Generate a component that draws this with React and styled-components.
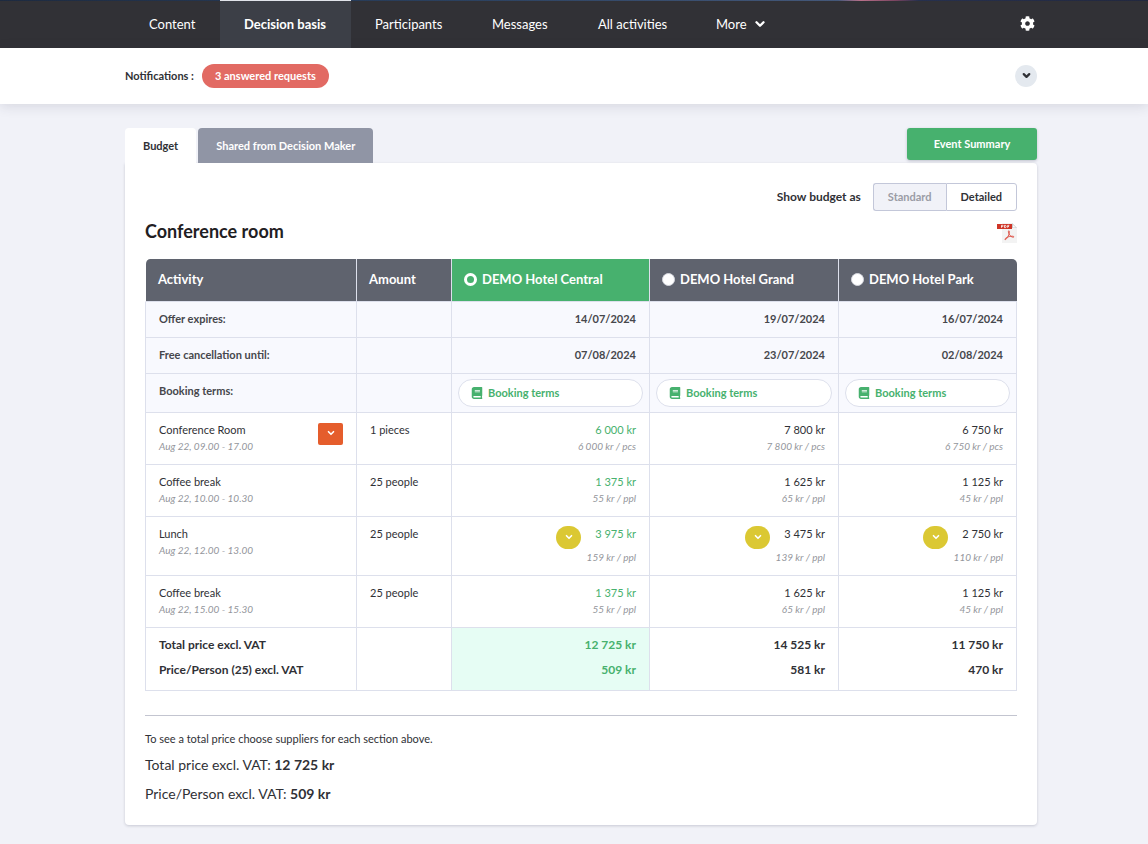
import { useState } from "react";
import styled, { createGlobalStyle } from "styled-components";
import { ChevronDown } from "lucide-react";
import { FaBook, FaCog } from "react-icons/fa";

const hotels = [
  { name: "DEMO Hotel Central", expires: "14/07/2024", cancel: "07/08/2024", total: "12 725 kr", person: "509 kr" },
  { name: "DEMO Hotel Grand", expires: "19/07/2024", cancel: "23/07/2024", total: "14 525 kr", person: "581 kr" },
  { name: "DEMO Hotel Park", expires: "16/07/2024", cancel: "02/08/2024", total: "11 750 kr", person: "470 kr" },
];

const activities = [
  {
    name: "Conference Room",
    time: "Aug 22, 09.00 - 17.00",
    amount: "1 pieces",
    expandable: true,
    prices: [
      ["6 000 kr", "6 000 kr / pcs"],
      ["7 800 kr", "7 800 kr / pcs"],
      ["6 750 kr", "6 750 kr / pcs"],
    ],
  },
  {
    name: "Coffee break",
    time: "Aug 22, 10.00 - 10.30",
    amount: "25 people",
    prices: [
      ["1 375 kr", "55 kr / ppl"],
      ["1 625 kr", "65 kr / ppl"],
      ["1 125 kr", "45 kr / ppl"],
    ],
  },
  {
    name: "Lunch",
    time: "Aug 22, 12.00 - 13.00",
    amount: "25 people",
    options: true,
    prices: [
      ["3 975 kr", "159 kr / ppl"],
      ["3 475 kr", "139 kr / ppl"],
      ["2 750 kr", "110 kr / ppl"],
    ],
  },
  {
    name: "Coffee break",
    time: "Aug 22, 15.00 - 15.30",
    amount: "25 people",
    prices: [
      ["1 375 kr", "55 kr / ppl"],
      ["1 625 kr", "65 kr / ppl"],
      ["1 125 kr", "45 kr / ppl"],
    ],
  },
];

function PdfIcon() {
  return (
    <svg width="20" height="20" viewBox="0 0 20 20" aria-hidden="true">
      <path d="M5 0h10l5 5v15H5z" fill="#f3f3f3" />
      <path d="M15 0l5 5h-5z" fill="#c9c9c9" />
      <path d="M16 2l3 2.500h-3z" fill="#fff" />
      <path d="M0 1h15v5H0z" fill="#cf3527" />
      <path
        d="M4.500 4.800V2.300h1c1 0 1 1.300 0 1.300h-1M7.500 2.300v2.400h.7c1.300 0 1.300-2.400 0-2.400zM10.700 4.800V2.300h1.600M10.700 3.500h1.300"
        fill="none"
        stroke="#fff"
        strokeWidth=".8"
      />
      <path
        d="M11.800 7.800c1.200 0 .5 3.200-.6 5.300-1 2-2.400 3.900-3.200 3.500-.8-.6 1.600-2.400 4.200-3 2.100-.5 4.600-.6 4.700.2.100 1-2.400.4-3.800-1.200-1.400-1.500-2.200-4.800-1.300-4.800z"
        fill="none"
        stroke="#dd4b3e"
        strokeWidth=".9"
      />
    </svg>
  );
}

function App() {
  const [selected, setSelected] = useState(0);
  const [view, setView] = useState("Detailed");

  return (
    <>
      <GlobalStyle />
      <TopNav>
        <NavLinks>
          <NavLink href="#content">Content</NavLink>
          <NavLink href="#decision" $active>
            Decision basis
          </NavLink>
          <NavLink href="#participants">Participants</NavLink>
          <NavLink href="#messages">Messages</NavLink>
          <NavLink href="#activities">All activities</NavLink>
          <NavLink href="#more">
            More <ChevronDown size={14} strokeWidth={4} />
          </NavLink>
        </NavLinks>
        <SettingsButton aria-label="Settings">
          <FaCog size={15} />
        </SettingsButton>
      </TopNav>

      <NotificationBar>
        <NotificationLabel>Notifications :</NotificationLabel>
        <RequestsButton>3 answered requests</RequestsButton>
        <CollapseButton aria-label="Show notifications">
          <ChevronDown size={11} strokeWidth={5} />
        </CollapseButton>
      </NotificationBar>

      <Page>
        <TabBar>
          <Tab $active>Budget</Tab>
          <Tab>Shared from Decision Maker</Tab>
          <SummaryButton>Event Summary</SummaryButton>
        </TabBar>

        <Card>
          <ViewRow>
            <ViewLabel>Show budget as</ViewLabel>
            {["Standard", "Detailed"].map((name) => (
              <ViewButton key={name} $active={view === name} onClick={() => setView(name)}>
                {name}
              </ViewButton>
            ))}
          </ViewRow>

          <SectionHeader>
            <SectionTitle>Conference room</SectionTitle>
            <PdfLink href="#pdf" aria-label="Download as PDF">
              <PdfIcon />
            </PdfLink>
          </SectionHeader>

          <Table>
            <colgroup>
              <Col $width={212} />
              <Col $width={95} />
              <Col $width={198} />
              <Col $width={189} />
              <Col $width={178} />
            </colgroup>
            <thead>
              <tr>
                <HeadCell>Activity</HeadCell>
                <HeadCell>Amount</HeadCell>
                {hotels.map((hotel, i) => (
                  <HeadCell key={hotel.name} $selected={selected === i}>
                    <HotelLabel>
                      <Radio
                        type="radio"
                        name="hotel"
                        checked={selected === i}
                        onChange={() => setSelected(i)}
                      />
                      {hotel.name}
                    </HotelLabel>
                  </HeadCell>
                ))}
              </tr>
            </thead>
            <tbody>
              <tr>
                <InfoCell>Offer expires:</InfoCell>
                <InfoCell />
                {hotels.map((hotel) => (
                  <InfoCell key={hotel.name} $right>
                    {hotel.expires}
                  </InfoCell>
                ))}
              </tr>
              <tr>
                <InfoCell>Free cancellation until:</InfoCell>
                <InfoCell />
                {hotels.map((hotel) => (
                  <InfoCell key={hotel.name} $right>
                    {hotel.cancel}
                  </InfoCell>
                ))}
              </tr>
              <tr>
                <InfoCell>Booking terms:</InfoCell>
                <InfoCell />
                {hotels.map((hotel) => (
                  <TermsCell key={hotel.name}>
                    <TermsButton>
                      <FaBook size={12} />
                      Booking terms
                    </TermsButton>
                  </TermsCell>
                ))}
              </tr>
              {activities.map((activity, row) => (
                <tr key={row}>
                  <Cell>
                    <ActivityRow>
                      <div>
                        {activity.name}
                        <Detail>{activity.time}</Detail>
                      </div>
                      {activity.expandable && (
                        <ExpandButton aria-label="Show details">
                          <ChevronDown size={10} strokeWidth={4} />
                        </ExpandButton>
                      )}
                    </ActivityRow>
                  </Cell>
                  <Cell>{activity.amount}</Cell>
                  {activity.prices.map(([price, unit], i) => (
                    <Cell key={i} $right>
                      <PriceRow $green={selected === i}>
                        {activity.options && (
                          <OptionsButton aria-label="Show options">
                            <ChevronDown size={10} strokeWidth={4} />
                          </OptionsButton>
                        )}
                        {price}
                      </PriceRow>
                      <Detail>{unit}</Detail>
                    </Cell>
                  ))}
                </tr>
              ))}
              <tr>
                <TotalCell>
                  <TotalLine>Total price excl. VAT</TotalLine>
                  <TotalLine>Price/Person (25) excl. VAT</TotalLine>
                </TotalCell>
                <TotalCell />
                {hotels.map((hotel, i) => (
                  <TotalCell key={hotel.name} $right $selected={selected === i}>
                    <TotalLine>{hotel.total}</TotalLine>
                    <TotalLine>{hotel.person}</TotalLine>
                  </TotalCell>
                ))}
              </tr>
            </tbody>
          </Table>

          <Summary>
            <Hint>To see a total price choose suppliers for each section above.</Hint>
            <SummaryLine>
              Total price excl. VAT: <strong>{hotels[selected].total}</strong>
            </SummaryLine>
            <SummaryLine>
              Price/Person excl. VAT: <strong>{hotels[selected].person}</strong>
            </SummaryLine>
          </Summary>
        </Card>
      </Page>
    </>
  );
}

const GlobalStyle = createGlobalStyle`
  * {
    box-sizing: border-box;
  }
  body {
    margin: 0;
    background: #f1f2f8;
    color: #303136;
    font-family: Lato, "Open Sans", sans-serif;
    font-size: 11px;
    line-height: 16px;
  }
  button {
    border: none;
    padding: 0;
    font: inherit;
    color: inherit;
    cursor: pointer;
  }
  a {
    color: inherit;
    text-decoration: none;
  }
`;

const TopNav = styled.nav`
  display: flex;
  justify-content: space-between;
  height: 48px;
  padding: 0 111px 0 125px;
  color: white;
  background:
    linear-gradient(90deg, #1d2a40, #2b4160 40%, #44587a 73%, #b8708a 75%, #7a4460 78%, #26304e 80%, #22283f) top / 100% 1px no-repeat,
    #313136;
`;

const NavLinks = styled.div`
  display: grid;
  grid-template-columns: 95px 131px 117px 106px 118px auto;
`;

const NavLink = styled.a`
  display: flex;
  align-items: center;
  gap: 6px;
  padding: 0 24px;
  font-size: 13px;
  white-space: nowrap;
  font-weight: ${({ $active }) => ($active ? 700 : 400)};
  background: ${({ $active }) => ($active ? "#3c3f47" : "transparent")};
  box-shadow: ${({ $active }) => ($active ? "inset 0 1px #e0e3ea" : "none")};
`;

const SettingsButton = styled.button`
  width: 20px;
  height: 46px;
  background: none;
  display: flex;
  align-items: center;
  justify-content: center;
`;

const NotificationBar = styled.section`
  display: flex;
  align-items: center;
  height: 56px;
  padding: 0 111px 0 125px;
  background: white;
  box-shadow: 0 2px 12px rgba(40, 45, 70, 0.14);
`;

const NotificationLabel = styled.span`
  font-weight: 700;
  margin-right: 8px;
`;

const RequestsButton = styled.button`
  height: 24px;
  padding: 0 13px;
  border-radius: 12px;
  background: #e26a63;
  color: white;
  font-weight: 700;
`;

const CollapseButton = styled.button`
  display: flex;
  align-items: center;
  justify-content: center;
  width: 22px;
  height: 22px;
  margin-left: auto;
  padding-bottom: 2px;
  border-radius: 50%;
  background: #e4e9ef;
`;

const Page = styled.main`
  padding: 24px 111px 19px 125px;
`;

const TabBar = styled.div`
  display: flex;
  gap: 2px;
`;

const Tab = styled.button`
  height: 35px;
  padding: 0 18px;
  border-radius: 4px 4px 0 0;
  font-weight: 700;
  background: ${({ $active }) => ($active ? "white" : "#9095a5")};
  color: ${({ $active }) => ($active ? "#303136" : "white")};
`;

const SummaryButton = styled.button`
  width: 130px;
  height: 32px;
  margin-left: auto;
  border-radius: 3px;
  background: #47b16e;
  color: white;
  font-weight: 700;
  box-shadow: 0 1px 3px rgba(40, 45, 70, 0.25);
`;

const Card = styled.section`
  padding: 20px;
  background: white;
  border-radius: 0 4px 4px 4px;
  box-shadow: 0 1px 3px rgba(40, 45, 70, 0.2);
`;

const ViewRow = styled.div`
  display: flex;
  justify-content: flex-end;
  align-items: center;
`;

const ViewLabel = styled.span`
  margin-right: 12px;
  font-size: 12px;
  font-weight: 700;
`;

const ViewButton = styled.button`
  height: 28px;
  padding: 0 14px;
  border: 1px solid #c3c7d9;
  font-weight: 700;
  background: ${({ $active }) => ($active ? "white" : "#f1f2f8")};
  color: ${({ $active }) => ($active ? "#303136" : "#9a9ca5")};

  &:first-of-type {
    border-right: none;
    border-radius: 3px 0 0 3px;
  }
  &:last-of-type {
    border-radius: 0 3px 3px 0;
  }
`;

const SectionHeader = styled.div`
  display: flex;
  justify-content: space-between;
  align-items: flex-end;
  height: 24px;
  margin: 8px 0 16px;
`;

const SectionTitle = styled.h2`
  margin: 0;
  font-size: 18px;
  line-height: 24px;
  color: #1f2023;
`;

const PdfLink = styled.a`
  display: flex;
`;

const Table = styled.table`
  width: 100%;
  table-layout: fixed;
  border-collapse: separate;
  border-spacing: 0;
`;

const Col = styled.col`
  width: ${({ $width }) => $width}px;
`;

const HeadCell = styled.th`
  height: 43px;
  padding: 0 12px 2px;
  text-align: left;
  font-size: 13px;
  color: white;
  background: ${({ $selected }) => ($selected ? "#47b16e" : "#5f636e")};
  background-clip: padding-box;
  border-right: 1px solid #dde0ec;
  border-bottom: 1px solid #dde0ec;

  &:first-child {
    border-left: 1px solid transparent;
    border-top-left-radius: 5px;
  }
  &:last-child {
    border-right: none;
    border-top-right-radius: 5px;
  }
`;

const HotelLabel = styled.label`
  display: flex;
  align-items: center;
  gap: 5px;
  white-space: nowrap;
`;

const Radio = styled.input`
  appearance: none;
  width: 13px;
  height: 13px;
  margin: 0;
  border-radius: 50%;
  border: 1px solid #d5d7de;
  background: white;

  &:checked {
    border: 3px solid white;
    background: #47b16e;
  }
`;

const Cell = styled.td`
  padding: 9px 13px 10px;
  vertical-align: top;
  text-align: ${({ $right }) => ($right ? "right" : "left")};
  border-right: 1px solid #dde0ec;
  border-bottom: 1px solid #dde0ec;

  &:first-child {
    border-left: 1px solid #dde0ec;
  }
`;

const InfoCell = styled(Cell)`
  font-weight: 700;
  color: #46474c;
  background: #f8f9fe;
`;

const TermsCell = styled(InfoCell)`
  padding: 5px 6px;
`;

const TermsButton = styled.button`
  display: flex;
  align-items: center;
  gap: 5px;
  width: 100%;
  height: 28px;
  padding: 0 12px;
  border: 1px solid #dde0ec;
  border-radius: 14px;
  background: white;
  color: #47b16e;
`;

const ActivityRow = styled.div`
  display: flex;
  justify-content: space-between;
  align-items: flex-start;
`;

const Detail = styled.div`
  font-size: 10px;
  font-style: italic;
  color: #94969c;
`;

const ExpandButton = styled.button`
  width: 25px;
  height: 22px;
  margin-top: 1px;
  border-radius: 2px;
  background: #e55d2c;
  color: white;
`;

const PriceRow = styled.div`
  display: flex;
  justify-content: flex-end;
  gap: 14px;
  color: ${({ $green }) => ($green ? "#47b16e" : "inherit")};
`;

const OptionsButton = styled.button`
  width: 25px;
  height: 23px;
  border-radius: 12px;
  background: #dbc833;
  color: white;
`;

const TotalCell = styled(Cell)`
  padding-bottom: 12px;
  font-size: 12px;
  font-weight: 700;
  color: ${({ $selected }) => ($selected ? "#47b16e" : "inherit")};
  background: ${({ $selected }) => ($selected ? "#e6fdf4" : "white")};
`;

const TotalLine = styled.div`
  & + & {
    margin-top: 9px;
  }
`;

const Summary = styled.div`
  margin-top: 24px;
  padding: 15px 0 1px;
  border-top: 1px solid #c3c5d0;
`;

const Hint = styled.p`
  margin: 0 0 8px;
`;

const SummaryLine = styled.p`
  margin: 0 0 9px;
  font-size: 14px;
  line-height: 20px;

  &:last-child {
    margin-bottom: 0;
  }
`;

export default App;
